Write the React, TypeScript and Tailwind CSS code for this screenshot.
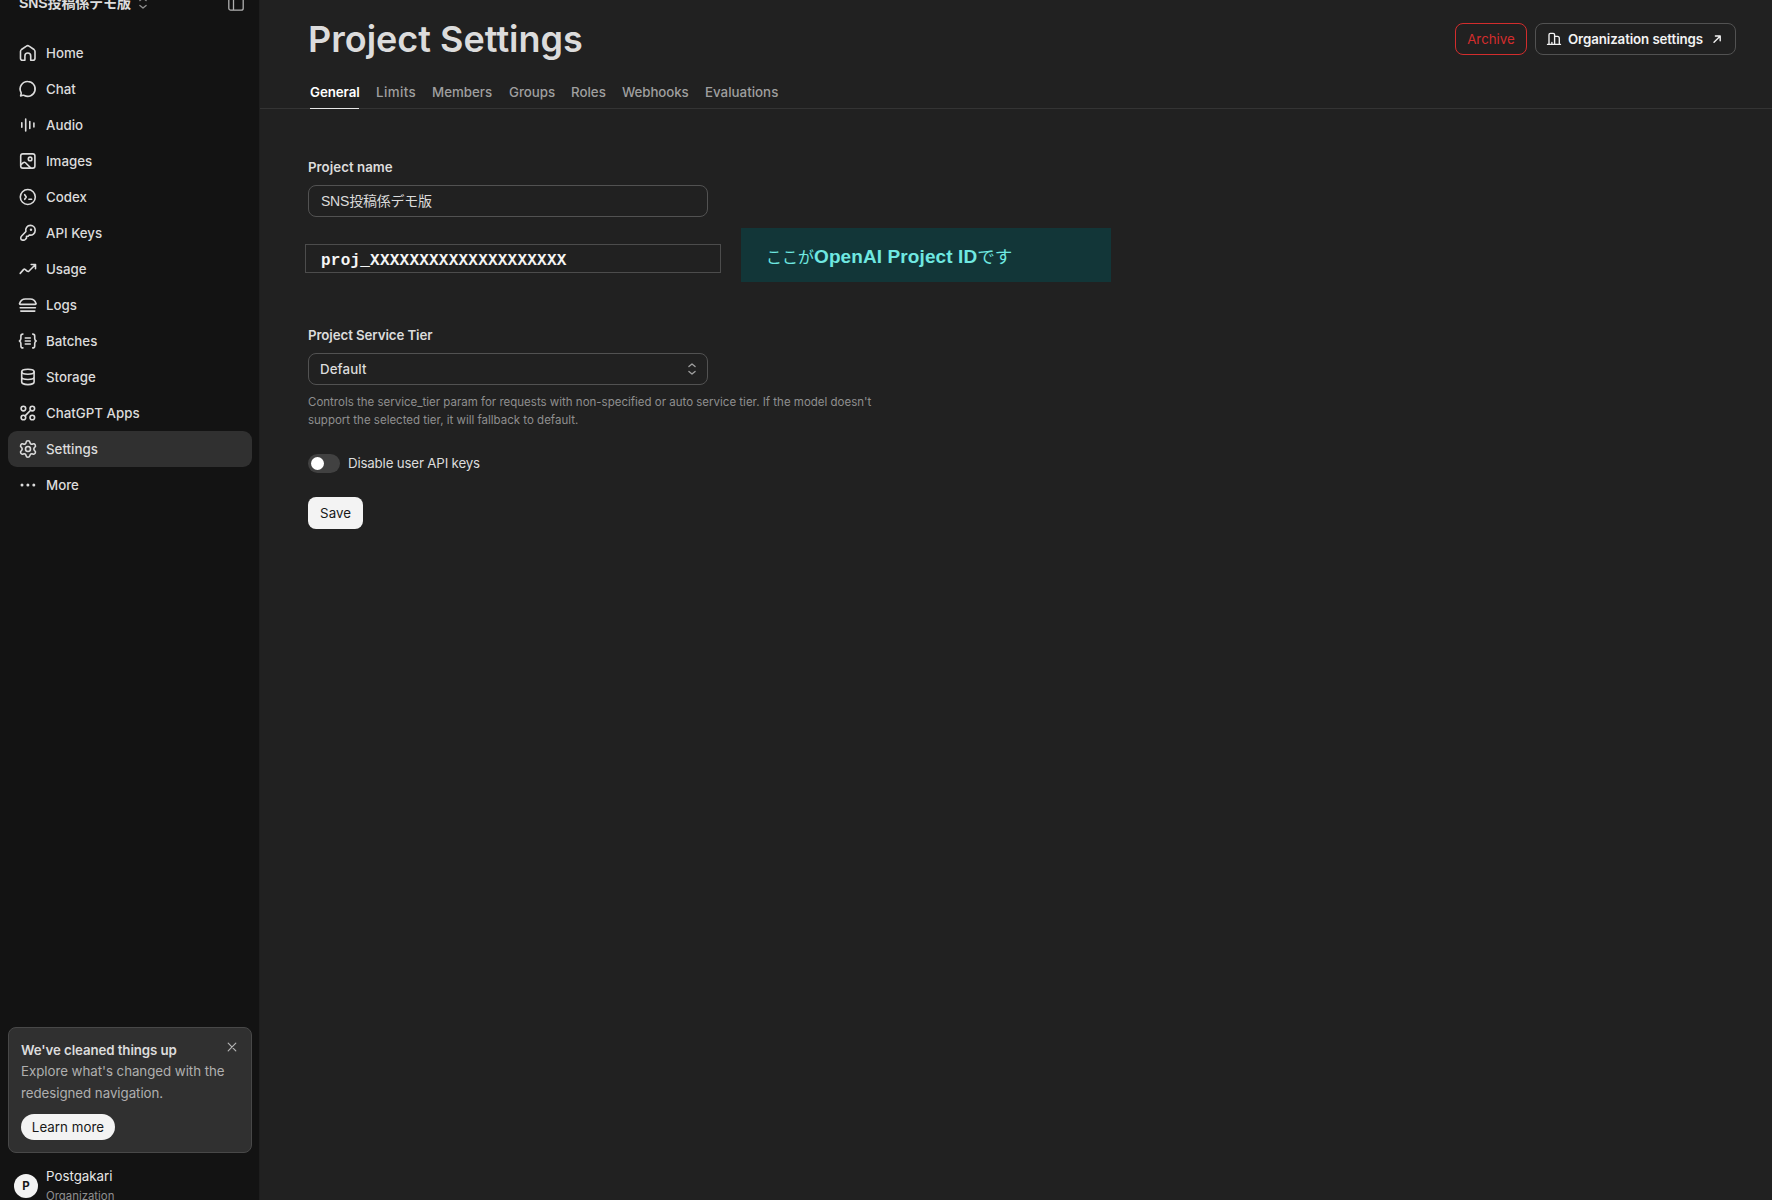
import type { ReactNode } from "react";
import { Settings } from "lucide-react";

function Icon({ children }: { children: ReactNode }) {
  return (
    <svg width="20" height="20" viewBox="0 0 20 20" fill="none" stroke="currentColor" strokeWidth="1.6" strokeLinecap="round" strokeLinejoin="round" className="shrink-0">
      {children}
    </svg>
  );
}

const nav: { label: string; icon: ReactNode; active?: boolean }[] = [
  { label: "Home", icon: <Icon><path d="M2.5 8.4c0-.8.4-1.4 1-1.9l4.900-3.400c.8-.6 1.900-.6 2.700 0L16 6.500c.6.5 1 1.100 1 1.900v6.900c0 1.100-.9 2-2 2h-2.300v-4.400a2.900 2.900 0 0 0-5.800 0v4.400H4.500c-1.100 0-2-.9-2-2z" /></Icon> },
  { label: "Chat", icon: <Icon><path d="M9.800 2.500a7.400 7.400 0 1 1-3.500 13.950c-.5-.25-.9-.25-1.400-.15l-2.300.6.550-2.200c.15-.5.050-.9-.15-1.400A7.400 7.400 0 0 1 9.800 2.500z" /></Icon> },
  { label: "Audio", icon: <Icon><path d="M3.800 7.700v4.600M7.700 4v12M11.800 6.600v6.800M15.900 8.100v3.800" /></Icon> },
  { label: "Images", icon: <Icon><rect x="2.700" y="2.900" width="14.200" height="14.200" rx="2.200" /><circle cx="12.100" cy="7.900" r="1.800" /><path d="M3 13.600l2.300-1.900c.7-.6 1.600-.5 2.200.1l5.100 5.100" /></Icon> },
  { label: "Codex", icon: <Icon><circle cx="9.800" cy="10" r="7.500" /><path d="M6.700 7.700L8.200 10l-1.500 2.300M10.900 12.200h2.700" /></Icon> },
  { label: "API Keys", icon: <Icon><path d="M7.900 8.500C7 5 9.300 2.400 12.500 2.400a4.800 4.800 0 0 1 4.700 4.800c0 3.300-2.700 5.400-5.900 4.800l-1.100 1.300H8.500v1.800l-1.300 1.400c-.4.4-.9.6-1.400.6H4.400c-.9 0-1.600-.7-1.600-1.600v-.8c0-.5.2-1 .6-1.400z" /><circle cx="13" cy="6.700" r="1.200" fill="currentColor" stroke="none" /></Icon> },
  { label: "Usage", icon: <Icon><path d="M2.200 14.400L5.700 10.400c.4-.4 1-.5 1.400-.1l2.300 2c.4.4 1 .3 1.400-.1L17.300 5.700M13.200 5.500h4.300v4.300" /></Icon> },
  { label: "Logs", icon: <Icon><path d="M2.300 9.400h15c.6 0 .9-.5.700-1-.9-2.700-2.900-4.400-5.700-4.400h-5C4.500 4 2.500 5.700 1.600 8.400c-.2.5.1 1 .7 1zM2.200 12.800h15.200M2.800 16.100h14" /></Icon> },
  { label: "Batches", icon: <Icon><path d="M4.900 3.100c-1.500 0-2 .8-2 2v2.400c0 1.400-.6 2.100-1.500 2.500.9.4 1.500 1.100 1.500 2.500v2.400c0 1.200.5 2 2 2M14.700 3.100c1.500 0 2 .8 2 2v2.400c0 1.400.6 2.100 1.500 2.500-.9.4-1.500 1.100-1.500 2.500v2.400c0 1.200-.5 2-2 2M7.300 7h5M7.300 10h5M7.300 13h5" /></Icon> },
  { label: "Storage", icon: <Icon><ellipse cx="9.900" cy="4.800" rx="6.200" ry="2.500" /><path d="M3.700 4.800v10.200c0 1.400 2.800 2.600 6.200 2.600s6.200-1.200 6.200-2.600V4.800M3.700 10c0 1.400 2.800 2.500 6.200 2.500s6.200-1.100 6.200-2.500" /></Icon> },
  { label: "ChatGPT Apps", icon: <Icon><circle cx="5.400" cy="5.600" r="2.300" /><circle cx="14.300" cy="5.600" r="2.300" /><circle cx="5.400" cy="14.500" r="2.300" /><circle cx="14.300" cy="14.500" r="2.300" /><path d="M7.100 12.900l5.500-5.600" /></Icon> },
  { label: "Settings", icon: <Settings size={20} strokeWidth={1.9} className="shrink-0" />, active: true },
  { label: "More", icon: <Icon><g fill="currentColor" stroke="none"><circle cx="4" cy="10" r="1.500" /><circle cx="9.900" cy="10" r="1.500" /><circle cx="15.800" cy="10" r="1.500" /></g></Icon> },
];

const tabs: [string, string][] = [
  ["Limits", "w-[56px] tracking-[0.4px]"],
  ["Members", "w-[77px]"],
  ["Groups", "w-[62px]"],
  ["Roles", "w-[51px]"],
  ["Webhooks", "w-[83px] tracking-[-0.1px]"],
  ["Evaluations", "w-[80px] tracking-[0.02px]"],
];

function UpDown({ className }: { className: string }) {
  return (
    <svg width="10" height="14" viewBox="0 0 10 14" fill="none" stroke="currentColor" strokeWidth="1.300" strokeLinecap="round" strokeLinejoin="round" className={className}>
      <path d="M1.900 4.600L5 1.900l3.100 2.700M1.900 9.400L5 12.100l3.100-2.700" />
    </svg>
  );
}

export default function App() {
  return (
    <div className="flex h-[1200px] w-[1772px] overflow-hidden bg-[#212121] font-[Inter,'Noto_Sans_CJK_JP',sans-serif] text-[13.300px] leading-5 text-[#dcdcdc]">
      <aside className="flex w-[260px] shrink-0 flex-col border-r border-[#1e1e1e] bg-[#131313]">
        <div className="-mt-[8px] flex h-[22px] shrink-0 items-center pr-[15px] pl-[19px]">
          <span className="font-['Liberation_Sans','Noto_Sans_CJK_JP',sans-serif] text-[14px] font-bold tracking-[-0.1px] whitespace-nowrap">SNS投稿係デモ版</span>
          <UpDown className="ml-[7px] text-[#8f8f8f]" />
          <svg width="16" height="16" viewBox="0 0 16 16" fill="none" stroke="#b0b0b0" strokeWidth="1.300" className="ml-auto">
            <rect x="0.800" y="0.800" width="14.400" height="14.400" rx="2" />
            <path d="M5.500 1v14" />
          </svg>
        </div>
        <nav className="mt-[21px] flex flex-col px-2">
          {nav.map((n) => (
            <a key={n.label} className={n.active ? "flex h-9 w-[244px] items-center gap-2 rounded-[9px] bg-[#303030] pl-[10px] font-medium" : "flex h-9 w-[244px] items-center gap-2 pl-[10px] font-medium"}>
              {n.icon}
              <span>{n.label}</span>
            </a>
          ))}
        </nav>
        <section className="mx-2 mt-auto h-[126px] w-[244px] shrink-0 rounded-[8px] border border-[#484848] bg-[#303030] pl-3">
          <div className="flex h-[22px] items-start justify-between pt-[12px] pr-[13px]">
            <h2 className="font-semibold tracking-[-0.1px] whitespace-nowrap">We've cleaned things up</h2>
            <svg width="12" height="12" viewBox="0 0 12 12" stroke="#b4b4b4" strokeWidth="1.200" strokeLinecap="round" className="mt-px">
              <path d="M2.200 2.200l7.600 7.600M9.800 2.200L2.200 9.800" />
            </svg>
          </div>
          <p className="mt-[11px] leading-[21.500px] tracking-[-0.04px] whitespace-nowrap text-[#afafaf]">
            Explore what's changed with the
            <br />
            redesigned navigation.
          </p>
          <button className="mt-[10px] flex h-[26px] w-[94px] items-center justify-center rounded-full bg-[#f3f3f3] tracking-[0.05px] text-[#181818]">Learn more</button>
        </section>
        <div className="flex h-[47px] shrink-0 pt-[13px] pl-[14px]">
          <div className="mt-2 flex h-6 w-6 shrink-0 items-center justify-center rounded-full bg-[#f3f3f3] text-[11.500px] font-bold text-[#181818]">P</div>
          <div className="ml-2 whitespace-nowrap">
            <div className="text-[#e8e8e8]">Postgakari</div>
            <div className="text-[11.400px] leading-[20px] text-[#8f8f8f]">Organization</div>
          </div>
        </div>
      </aside>

      <main className="flex-1">
        <header className="flex h-[109px] flex-col border-b border-[#343434]">
          <div className="flex h-[78px] shrink-0 items-start justify-between pr-9 pl-12">
            <h1 className="mt-[17px] text-[36px] leading-[44px] font-semibold">Project Settings</h1>
            <div className="mt-[23px] flex gap-2">
              <button className="h-8 w-[72px] rounded-[8px] border border-[#d32d2d] text-[#d32d2d]">Archive</button>
              <button className="flex h-8 w-[201px] items-center rounded-[8px] border border-[#525252] pl-[10px] font-semibold tracking-[-0.1px] text-[#f3f3f3]">
                <svg width="16" height="16" viewBox="0 0 16 16" fill="none" stroke="currentColor" strokeWidth="1.350" strokeLinecap="round" strokeLinejoin="round">
                  <path d="M1.500 13.400h13M3 13.400V3.700c0-.8.600-1.400 1.400-1.400h2.800c.8 0 1.400.6 1.400 1.400v9.700M8.600 5.400h2.800c1.100 0 1.900.8 1.900 1.900v6.100M5.900 13.400v-2" />
                </svg>
                <span className="ml-[6px] w-[136px] text-left whitespace-nowrap">Organization settings</span>
                <svg width="10" height="10" viewBox="0 0 10 10" fill="none" stroke="currentColor" strokeWidth="1.400" strokeLinecap="round" strokeLinejoin="round" className="ml-[8px]">
                  <path d="M2 8.200L8 2.200M3.400 2h4.800v4.800" />
                </svg>
              </button>
            </div>
          </div>
          <div className="flex h-[31px] shrink-0 pl-[50px] text-[#9f9f9f]">
            <a className="mr-[17px] w-[49px] border-b border-[#e8e8e8] pt-1 font-semibold tracking-[-0.05px] text-white">General</a>
            {tabs.map(([label, cls]) => (
              <a key={label} className={"pt-1 font-[450] " + cls}>{label}</a>
            ))}
          </div>
        </header>

        <div className="flex flex-col items-start pl-12">
          <label className="mt-[48px] font-semibold tracking-[0.03px]">Project name</label>
          <div className="mt-2 flex h-8 w-[400px] items-center rounded-[8px] border border-[#525252] pl-3 font-['Liberation_Sans','Noto_Sans_CJK_JP',sans-serif] text-[14px] tracking-[-0.22px]">SNS投稿係デモ版</div>
          <div className="mt-[11px] -ml-[3px] flex items-start">
            <div className="mt-4 flex h-[29px] w-[416px] items-center border border-[#4c4c4c] pt-[5px] pl-[15px] font-['Liberation_Mono',monospace] text-[16px] font-bold tracking-[0.22px] text-[#f5f5f5]">proj_XXXXXXXXXXXXXXXXXXXX</div>
            <div className="ml-5 flex h-[54px] w-[370px] items-center bg-[#123638] pt-[2px] pl-[25px] font-['Liberation_Sans'] text-[19px] font-bold whitespace-nowrap text-[#6fe8e1]">
              <span className="font-['Noto_Sans_CJK_JP'] text-[16px] font-normal">ここが</span>
              <span className="pt-px tracking-[0.1px]">OpenAI Project ID</span>
              <span className="font-['Noto_Sans_CJK_JP'] text-[17.500px] font-normal">です</span>
            </div>
          </div>
          <label className="mt-[43px] font-semibold tracking-[-0.1px]">Project Service Tier</label>
          <div className="mt-2 flex h-8 w-[400px] items-center justify-between rounded-[8px] border border-[#525252] pr-[10px] pl-[11px] font-medium tracking-[0.1px]">
            Default
            <UpDown className="text-[#9f9f9f]" />
          </div>
          <p className="mt-2 text-[11.500px] leading-[18px] whitespace-nowrap text-[#8f8f8f]">
            Controls the service_tier param for requests with non-specified or auto service tier. If the model doesn't
            <br />
            support the selected tier, it will fallback to default.
          </p>
          <div className="mt-[24px] flex h-5 items-center">
            <span className="flex h-[19px] w-8 items-center rounded-full bg-[#414141] pl-[3px]">
              <span className="h-[13px] w-[13px] rounded-full bg-white" />
            </span>
            <span className="ml-2 tracking-[-0.17px]">Disable user API keys</span>
          </div>
          <button className="mt-6 h-8 w-[55px] rounded-[8px] bg-[#f3f3f3] text-[#181818]">Save</button>
        </div>
      </main>
    </div>
  );
}
